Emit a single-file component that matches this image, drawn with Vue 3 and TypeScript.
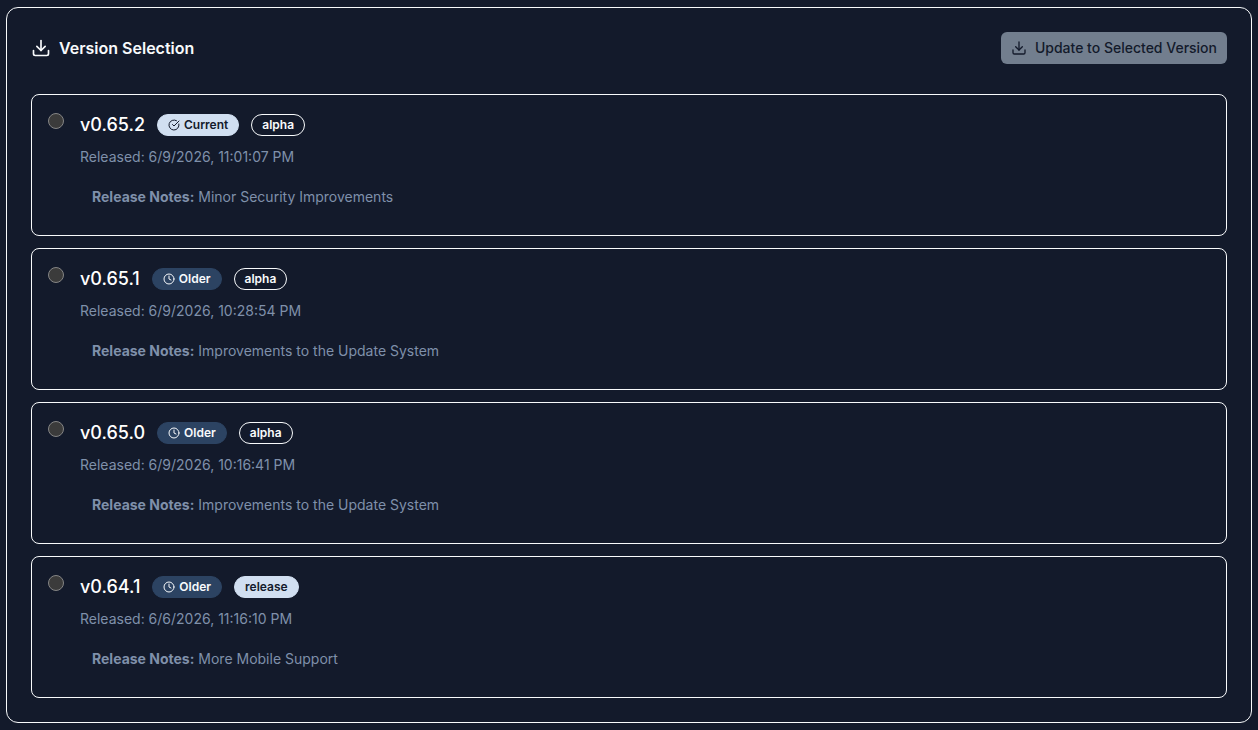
<script setup lang="ts">
import { ref } from 'vue'

interface Version {
  name: string
  current: boolean
  channel: 'alpha' | 'release'
  released: string
  notes: string
}

const versions: Version[] = [
  { name: 'v0.65.2', current: true, channel: 'alpha', released: '6/9/2026, 11:01:07 PM', notes: 'Minor Security Improvements' },
  { name: 'v0.65.1', current: false, channel: 'alpha', released: '6/9/2026, 10:28:54 PM', notes: 'Improvements to the Update System' },
  { name: 'v0.65.0', current: false, channel: 'alpha', released: '6/9/2026, 10:16:41 PM', notes: 'Improvements to the Update System' },
  { name: 'v0.64.1', current: false, channel: 'release', released: '6/6/2026, 11:16:10 PM', notes: 'More Mobile Support' },
]

const selected = ref<string | null>(null)
</script>

<template>
  <main class="page">
    <section class="panel">
      <header class="panel-header">
        <h1 class="title">
          <svg class="icon icon-lg" viewBox="0 0 24 24" aria-hidden="true">
            <path d="M21 15v4a2 2 0 0 1-2 2H5a2 2 0 0 1-2-2v-4" />
            <path d="m7 10 5 5 5-5" />
            <path d="M12 15V3" />
          </svg>
          Version Selection
        </h1>
        <button class="update" type="button" :disabled="selected === null">
          <svg class="icon icon-md" viewBox="0 0 24 24" aria-hidden="true">
            <path d="M21 15v4a2 2 0 0 1-2 2H5a2 2 0 0 1-2-2v-4" />
            <path d="m7 10 5 5 5-5" />
            <path d="M12 15V3" />
          </svg>
          Update to Selected Version
        </button>
      </header>

      <div class="versions">
        <label v-for="version in versions" :key="version.name" class="version">
          <input v-model="selected" class="radio" type="radio" name="version" :value="version.name" />
          <div class="details">
            <div class="heading">
              <span class="name">{{ version.name }}</span>
              <span v-if="version.current" class="badge badge-light">
                <svg class="icon icon-sm" viewBox="0 0 24 24" aria-hidden="true">
                  <path d="M21.801 10A10 10 0 1 1 17 3.335" />
                  <path d="m9 11 3 3L22 4" />
                </svg>
                Current
              </span>
              <span v-else class="badge badge-blue">
                <svg class="icon icon-sm" viewBox="0 0 24 24" aria-hidden="true">
                  <circle cx="12" cy="12" r="10" />
                  <path d="M12 6v6l4 2" />
                </svg>
                Older
              </span>
              <span class="badge" :class="version.channel === 'release' ? 'badge-light' : 'badge-outline'">{{ version.channel }}</span>
            </div>
            <p class="released">Released: {{ version.released }}</p>
            <p class="notes"><strong>Release Notes:</strong> {{ version.notes }}</p>
          </div>
        </label>
      </div>
    </section>
  </main>
</template>

<style>
body {
  background: #131a2b;
}
</style>

<style scoped>
.page {
  box-sizing: border-box;
  padding: 7px 6px;
  font-family: Inter, 'Liberation Sans', sans-serif;
  color: #f8fafc;
}

.panel {
  padding: 24px;
  border: 1px solid #f8fafc;
  border-radius: 12px;
}

.panel-header {
  display: flex;
  align-items: center;
  justify-content: space-between;
  margin-bottom: 30px;
}

.title {
  display: flex;
  align-items: center;
  gap: 8px;
  margin: 0;
  font-size: 16px;
  line-height: 24px;
  font-weight: 600;
}

.icon {
  flex: none;
  fill: none;
  stroke: currentColor;
  stroke-width: 2;
  stroke-linecap: round;
  stroke-linejoin: round;
}

.icon-lg {
  width: 20px;
  height: 20px;
}

.icon-md {
  width: 16px;
  height: 16px;
}

.icon-sm {
  width: 12px;
  height: 12px;
}

.update {
  display: flex;
  align-items: center;
  gap: 8px;
  height: 32px;
  padding: 0 10px;
  border: 0;
  border-radius: 6px;
  background: #727e8e;
  color: #131a2b;
  font-family: inherit;
  font-size: 14px;
  line-height: 20px;
  font-weight: 500;
}

.versions {
  display: flex;
  flex-direction: column;
  gap: 12px;
}

.version {
  display: flex;
  align-items: flex-start;
  gap: 16px;
  padding: 16px;
  border: 1px solid #f8fafc;
  border-radius: 8px;
}

.radio {
  appearance: none;
  flex: none;
  box-sizing: border-box;
  width: 16px;
  height: 16px;
  margin: 2px 0 0;
  border: 1px solid #858585;
  border-radius: 50%;
  background: #3b3b3b;
}

.radio:checked {
  background: #d1dff1;
}

.details {
  flex: 1;
  min-width: 0;
}

.heading {
  display: flex;
  align-items: center;
  gap: 12px;
}

.name {
  font-size: 18px;
  line-height: 28px;
  font-weight: 500;
  color: #ffffff;
}

.badge {
  display: inline-flex;
  align-items: center;
  gap: 4px;
  padding: 2px 10px;
  border: 1px solid transparent;
  border-radius: 11px;
  font-size: 12px;
  line-height: 16px;
  font-weight: 600;
}

.badge-light {
  border-color: #d1dff1;
  background: #d1dff1;
  color: #131a2b;
}

.badge-blue {
  border-color: #2c4362;
  background: #2c4362;
}

.badge-outline {
  border-color: #f8fafc;
}

.released,
.notes {
  margin: 8px 0 0;
  font-size: 14px;
  line-height: 20px;
  color: #7f90aa;
}

.notes {
  padding: 12px;
}

.notes strong {
  font-weight: 700;
}
</style>
